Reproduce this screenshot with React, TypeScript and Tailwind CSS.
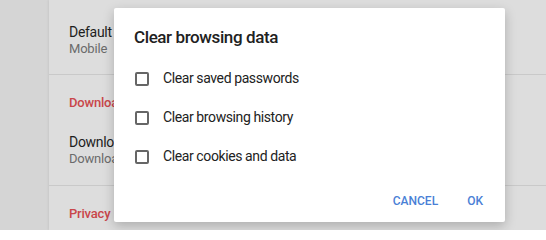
import { useState } from "react";

const options = [
  "Clear saved passwords",
  "Clear browsing history",
  "Clear cookies and data",
];

function Checkbox({ checked, onToggle }: { checked: boolean; onToggle: () => void }) {
  return (
    <button
      type="button"
      onClick={onToggle}
      aria-pressed={checked}
      className={
        checked
          ? "h-[14px] w-[14px] rounded-[2px] border-2 border-[#4a7fd6] bg-[#4a7fd6]"
          : "h-[14px] w-[14px] rounded-[2px] border-2 border-[#666666] bg-white"
      }
    />
  );
}

export default function App() {
  const [checked, setChecked] = useState<boolean[]>([false, false, false]);

  return (
    <div
      className="relative flex h-[230px] w-[546px] overflow-hidden bg-[#d6d6d6]"
      style={{ fontFamily: "Roboto, 'Noto Sans', sans-serif" }}
    >
      {/* sidebar strip */}
      <div className="w-[49px] shrink-0 bg-[#d5d5d5]" />

      {/* settings list behind the scrim */}
      <div className="flex flex-1 flex-col bg-[#dddddd] shadow-[-1px_0_2px_rgba(0,0,0,0.06)]">
        <div className="h-[75px] border-b border-[#c9c9c9] pl-[20px] pt-[23px]">
          <div className="text-[14px] leading-[18px] tracking-[-0.3px] text-[#1e1e1e]">Default</div>
          <div className="text-[13px] leading-[16px] tracking-[-0.2px] text-[#6b6b6b]">Mobile</div>
        </div>
        <div className="h-[111px] border-b border-[#c9c9c9] pl-[20px] pt-[19px]">
          <div className="text-[13px] font-medium leading-[18px] tracking-[-0.2px] text-[#c9464a]">Downloads</div>
          <div className="mt-[21px] text-[14px] leading-[18px] tracking-[-0.3px] text-[#1e1e1e]">Download location</div>
          <div className="text-[13px] leading-[16px] tracking-[-0.2px] text-[#6b6b6b]">Downloads</div>
        </div>
        <div className="pl-[20px] pt-[19px]">
          <div className="text-[13px] font-medium leading-[18px] tracking-[-0.2px] text-[#c9464a]">Privacy</div>
        </div>
      </div>

      {/* dialog */}
      <div className="absolute left-[114px] top-[8px] flex h-[214px] w-[391px] flex-col rounded-[2px] bg-white shadow-[0_4px_12px_rgba(0,0,0,0.22)]">
        <h2 className="pl-[20px] pt-[17px] text-[17px] font-medium leading-[24px] tracking-[-0.4px] text-[#212121]">
          Clear browsing data
        </h2>
        <div className="mt-[10px] flex flex-col">
          {options.map((label, i) => (
            <label key={label} className="flex h-[39px] items-center gap-[14px] pl-[21px]">
              <Checkbox
                checked={checked[i]}
                onToggle={() => setChecked((c) => c.map((v, j) => (j === i ? !v : v)))}
              />
              <span className="text-[14px] tracking-[-0.4px] text-[#222222]">{label}</span>
            </label>
          ))}
        </div>
        <div className="flex flex-1 items-center justify-end gap-[29px] pr-[22px] pt-[3px]">
          <button type="button" className="text-[12px] font-medium text-[#4a7fd6]">
            CANCEL
          </button>
          <button type="button" className="text-[12px] font-medium text-[#4a7fd6]">
            OK
          </button>
        </div>
      </div>
    </div>
  );
}
